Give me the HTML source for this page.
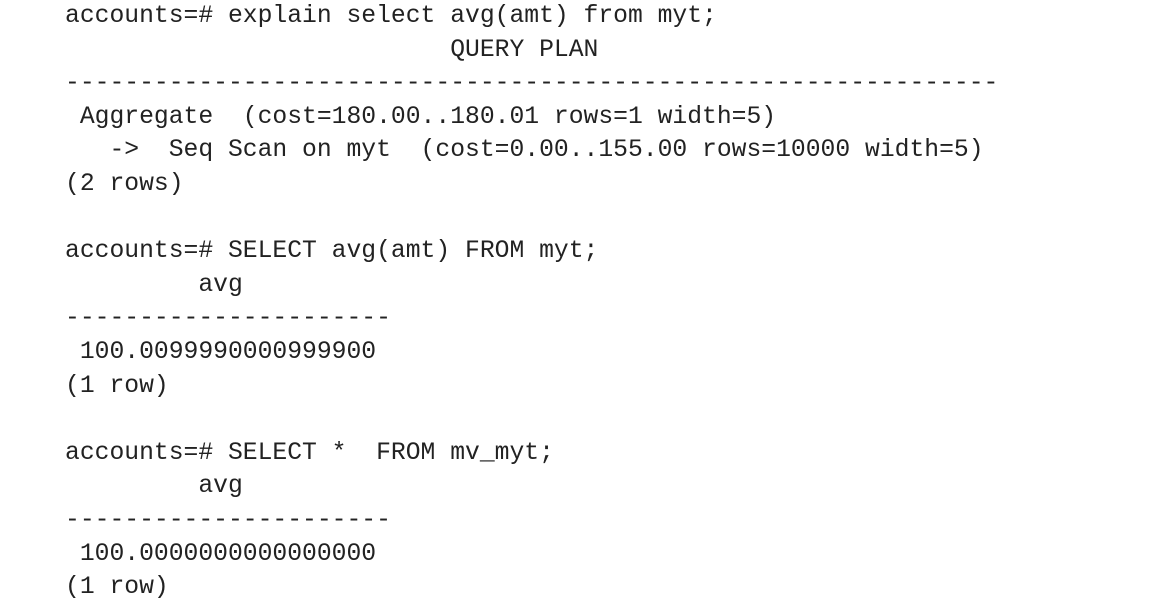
<!DOCTYPE html>
<html><head><meta charset="utf-8"><style>
html,body{margin:0;padding:0;background:#fff;width:1175px;height:605px;overflow:hidden}
pre{margin:0;position:absolute;left:65px;top:0px;font-family:"Liberation Mono",monospace;font-size:24.7px;line-height:33.6px;color:#222}
</style></head><body><pre>accounts=# explain select avg(amt) from myt;
                          QUERY PLAN
---------------------------------------------------------------
 Aggregate  (cost=180.00..180.01 rows=1 width=5)
   ->  Seq Scan on myt  (cost=0.00..155.00 rows=10000 width=5)
(2 rows)

accounts=# SELECT avg(amt) FROM myt;
         avg
----------------------
 100.0099990000999900
(1 row)

accounts=# SELECT *  FROM mv_myt;
         avg
----------------------
 100.0000000000000000
(1 row)</pre></body></html>
